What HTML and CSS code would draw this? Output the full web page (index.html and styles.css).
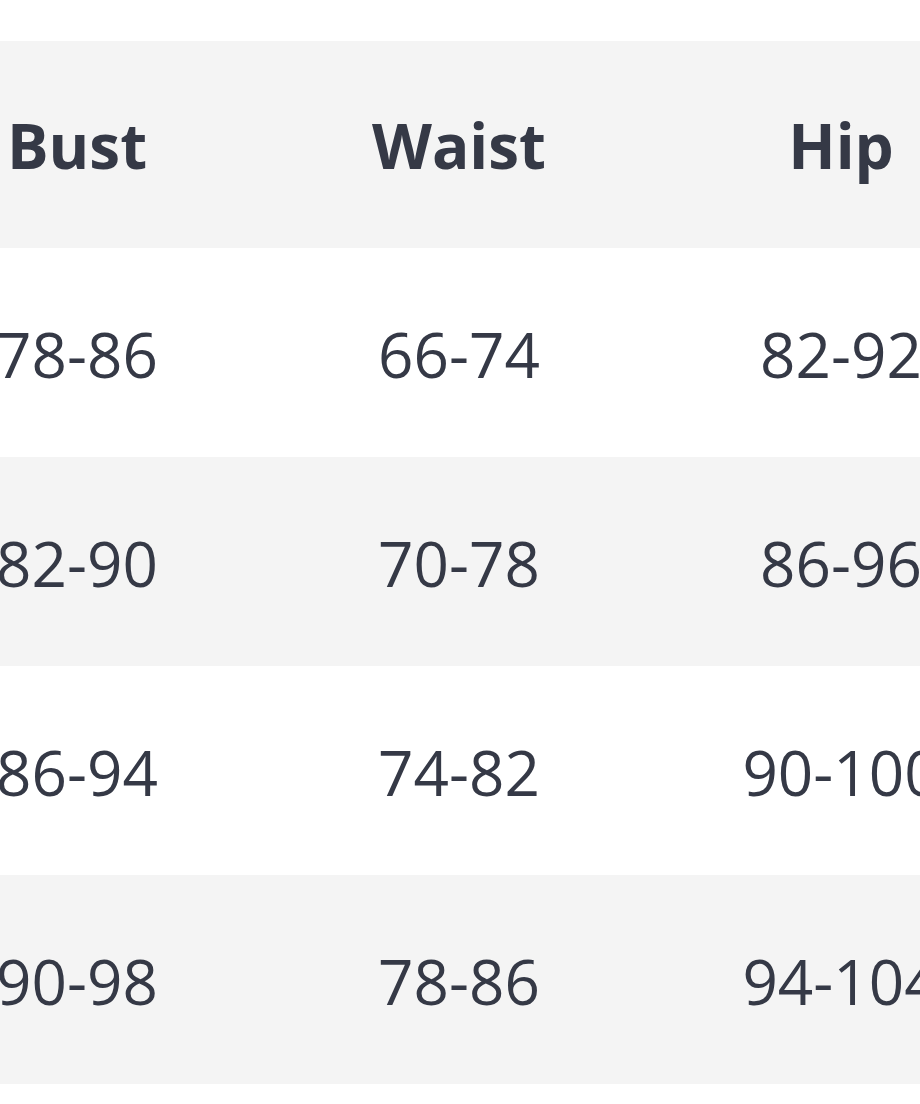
FILE: index.html
```html
<!DOCTYPE html>
<html>
<head>
<meta charset="utf-8">
<link rel="stylesheet" href="styles.css">
</head>
<body>
<div class="viewport">
  <table class="size-table">
    <thead>
      <tr><th>Bust</th><th>Waist</th><th>Hip</th></tr>
    </thead>
    <tbody>
      <tr><td>78-86</td><td>66-74</td><td>82-92</td></tr>
      <tr><td>82-90</td><td>70-78</td><td>86-96</td></tr>
      <tr><td>86-94</td><td>74-82</td><td>90-100</td></tr>
      <tr><td>90-98</td><td>78-86</td><td>94-104</td></tr>
      <tr><td>94-102</td><td>82-90</td><td>98-108</td></tr>
    </tbody>
  </table>
</div>
</body>
</html>
```
FILE: styles.css
```css
html, body {
  margin: 0;
  padding: 0;
  background: #ffffff;
  overflow: hidden;
}
.viewport {
  width: 920px;
  height: 1104px;
  overflow: hidden;
  padding-top: 41px;
  box-sizing: border-box;
}
.size-table {
  border-collapse: collapse;
  margin-left: -114px;
  width: 1146px;
  table-layout: fixed;
  font-family: "Open Sans", "Liberation Sans", sans-serif;
  color: #353946;
}
.size-table th,
.size-table td {
  text-align: center;
  vertical-align: middle;
  padding: 0;
  font-size: 62px;
  white-space: nowrap;
}
.size-table th {
  height: 207px;
  font-weight: 700;
  background: #f4f4f4;
}
.size-table td {
  height: 206px;
  font-weight: 400;
  padding-top: 3px;
}
.size-table tbody tr:nth-child(even) td {
  background: #f4f4f4;
}
```
